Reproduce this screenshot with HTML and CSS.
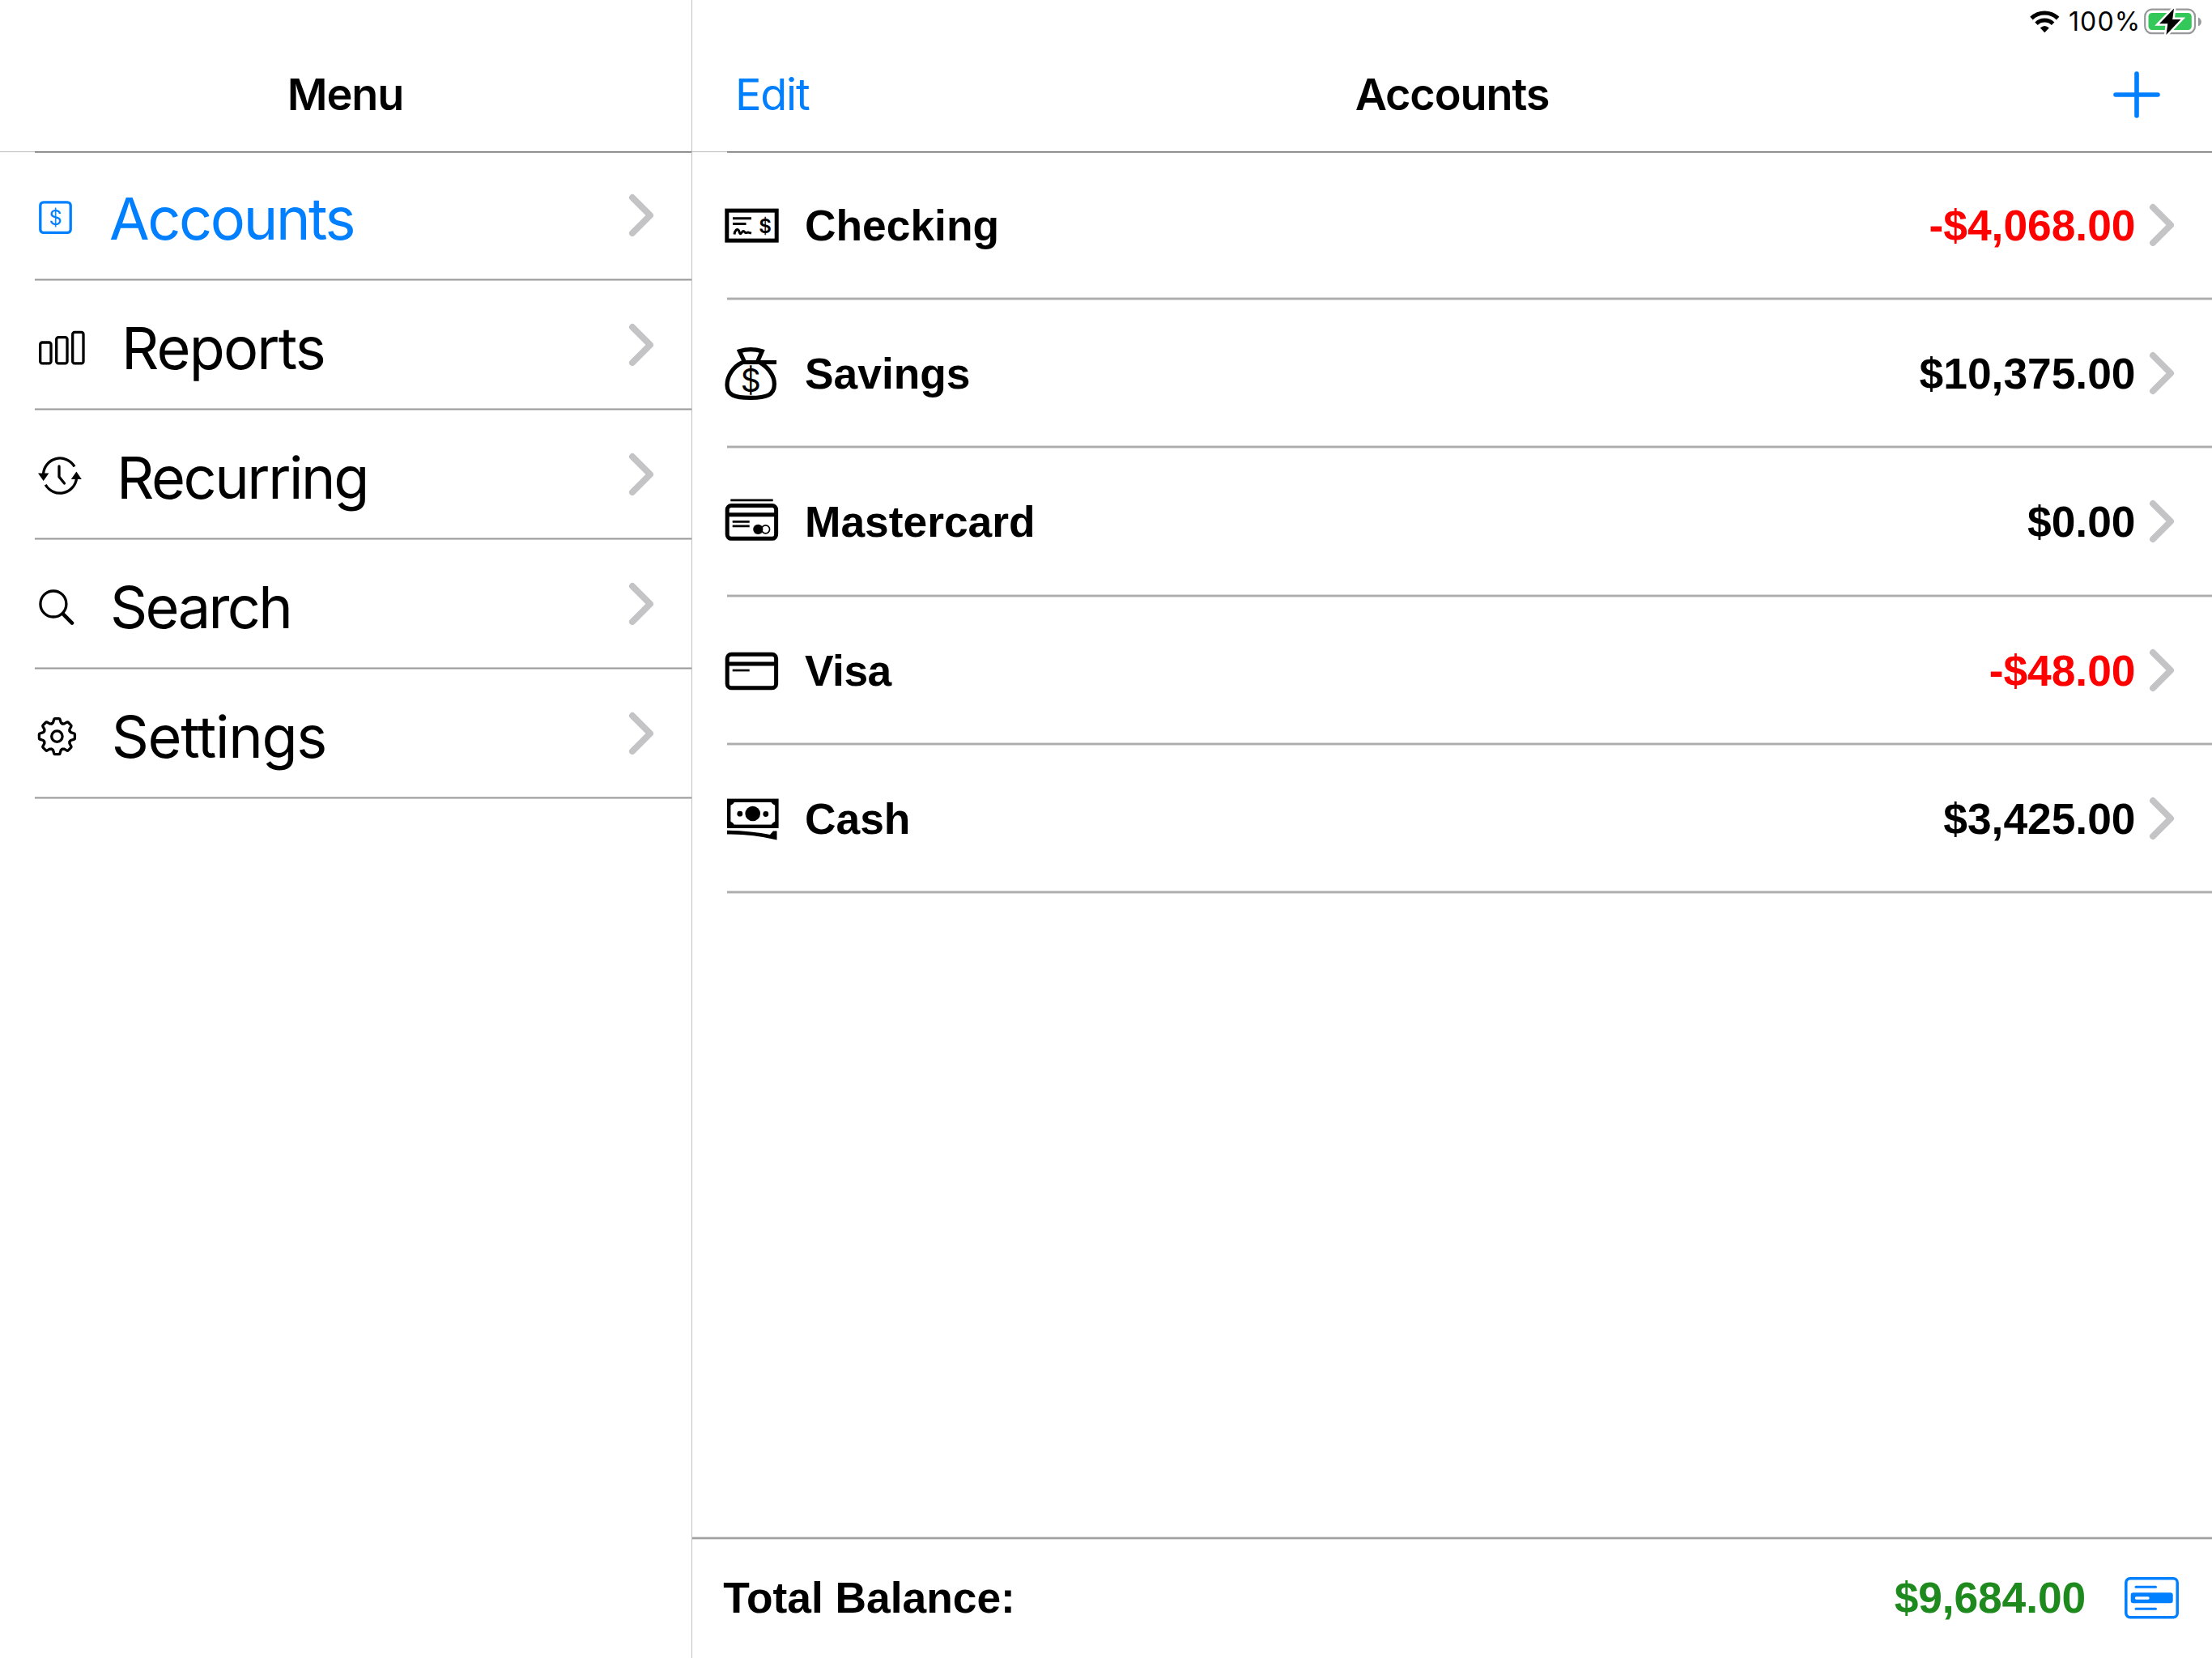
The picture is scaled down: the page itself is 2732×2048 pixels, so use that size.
FILE: index.html
```html
<!DOCTYPE html>
<html lang="en">
<head>
<meta charset="utf-8">
<title>Accounts</title>
<link rel="stylesheet" href="styles.css">
</head>
<body>
<svg class="defs" width="0" height="0" aria-hidden="true">
  <symbol id="chevron" viewBox="0 0 32 54"><path d="M5 5 27 27 5 49" fill="none" stroke="#c4c4c6" stroke-width="8" stroke-linecap="round" stroke-linejoin="round"/></symbol>
</svg>
<div class="app">
  <nav class="sidebar">
    <header class="navbar navbar-menu"><h1 class="title">Menu</h1></header>
    <ul class="menu">
      <li class="menu-row active">
        <svg class="menu-icon w-accounts" viewBox="43 192 92 152"><rect x="49.8" y="249.8" width="37.4" height="37.6" rx="4"/><text class="menu-dollar" x="68.4" y="277.6">$</text></svg>
        <span class="menu-label l-accounts">Accounts</span>
        <svg class="chev"><use href="#chevron"/></svg>
      </li>
      <li class="menu-row">
        <svg class="menu-icon w-reports" viewBox="43 352 107 152"><rect x="49.7" y="423" width="13.3" height="25.9" rx="2.5"/><rect x="69.7" y="416.6" width="13.3" height="32.3" rx="2.5"/><rect x="89.7" y="410.4" width="13.3" height="38.5" rx="2.5"/></svg>
        <span class="menu-label l-reports">Reports</span>
        <svg class="chev"><use href="#chevron"/></svg>
      </li>
      <li class="menu-row">
        <svg class="menu-icon w-recurring" viewBox="43 512 101 152"><path d="M53.5 586A20.6 20.6 0 0 1 92 576.4M56.2 598.8A20.6 20.6 0 0 0 94.6 590"/><path d="M73 576V589L79.5 597" stroke-linecap="round"/><path class="solid" d="M47 584.5H60.4L53.7 594zM94.4 582.5 100.8 592H87.8z"/></svg>
        <span class="menu-label l-recurring">Recurring</span>
        <svg class="chev"><use href="#chevron"/></svg>
      </li>
      <li class="menu-row">
        <svg class="menu-icon w-search" viewBox="43 672 93 152"><circle cx="65.9" cy="746" r="16"/><path d="M77.6 758.2 89 769.6" stroke-width="4.6" stroke-linecap="round"/></svg>
        <span class="menu-label l-search">Search</span>
        <svg class="chev"><use href="#chevron"/></svg>
      </li>
      <li class="menu-row">
        <svg class="menu-icon w-settings" viewBox="43 832 94.7 152">
          <g transform="translate(70.4 909.6)" stroke-linecap="round"><circle r="6.7"/>
            <path id="tooth" d="M-6.5-15.7 -4.9-17 -3.6-21.2Q-3.3-22-2.5-22H2.5Q3.3-22 3.6-21.2L4.9-17 6.5-15.7"/>
            <use href="#tooth" transform="rotate(45)"/><use href="#tooth" transform="rotate(90)"/><use href="#tooth" transform="rotate(135)"/><use href="#tooth" transform="rotate(180)"/><use href="#tooth" transform="rotate(225)"/><use href="#tooth" transform="rotate(270)"/><use href="#tooth" transform="rotate(315)"/>
          </g></svg>
        <span class="menu-label l-settings">Settings</span>
        <svg class="chev"><use href="#chevron"/></svg>
      </li>
    </ul>
  </nav>
  <main class="main">
    <div class="status">
      <svg class="wifi" viewBox="2505 0 42 46"><path d="M2509 22.6A23.5 23.5 0 0 1 2541.6 22.6M2515 29.2A14.8 14.8 0 0 1 2535.6 29.2" fill="none" stroke="#000" stroke-width="5"/><path d="M2519.8 34.6Q2525.3 29.4 2530.8 34.6L2525.3 40.2z"/></svg>
      <span class="percent">100%</span>
      <svg class="battery" viewBox="2646 0 76 46"><rect x="2649.2" y="11.7" width="61.8" height="29.4" rx="8.5" fill="none" stroke="#98989a" stroke-width="2.2"/><rect x="2653.5" y="16" width="53.3" height="21" rx="4.5" fill="#34c759"/><path d="M2715 21.5Q2718.8 23.5 2718.8 27T2715 32.5z" fill="#98989a"/><path class="bolt" d="M2685 10.5 2667 29.2H2677.3L2675.4 43 2693.4 24H2683.2z"/></svg>
    </div>
    <header class="navbar">
      <a class="edit">Edit</a>
      <h1 class="title">Accounts</h1>
      <svg class="plus" viewBox="0 0 58 58"><path d="M29 3V55M3 29H55"/></svg>
    </header>
    <ul class="accounts">
      <li class="account">
        <svg class="icon" viewBox="898 187.67 96 178.33"><rect x="897.8" y="259.8" width="61.4" height="37" stroke-width="5"/><path d="M905 269.3H928M905 276.1H921.5" stroke-width="3"/><path d="M907 289.2C907.5 284.5 910.5 281 912.5 284.5 913.5 287.5 914 289.5 915.5 287.5 917.5 284.5 918.5 284.5 920 286.5 922 288.5 923 286 924.5 286.8L928 287.8" stroke-width="3"/><text class="check-dollar" x="945" y="287.2">$</text></svg>
        <span class="name">Checking</span><span class="amount negative">-$4,068.00</span>
        <svg class="chev"><use href="#chevron"/></svg>
      </li>
      <li class="account">
        <svg class="icon" viewBox="898 371 96 178.33"><path d="M917 447.6C905 453 898 465 898 475.5 898 488 907 491.4 927 491.4S956.4 488 956.4 474.5C956.4 464 949 454 938 447.6M919.5 447 913.4 433.8Q927 429.6 941.2 433.8L935.5 447" stroke-width="5.2"/><path d="M917 447.6H959" stroke-width="5"/><text class="sack-dollar" x="927.3" y="484">$</text></svg>
        <span class="name">Savings</span><span class="amount">$10,375.00</span>
        <svg class="chev"><use href="#chevron"/></svg>
      </li>
      <li class="account">
        <svg class="icon" viewBox="898 554.33 96 178.33"><path d="M902.3 618.3H954.7" stroke-width="2.8"/><rect x="898.2" y="624.9" width="60.4" height="40.8" rx="5" stroke-width="5"/><path d="M898 636H959" stroke-width="5"/><path d="M904.7 644.7H925.7M904.7 650.2H925.7" stroke-width="2.7"/><circle cx="945.6" cy="654.2" r="5" stroke-width="1.7"/><circle class="solid" cx="936.3" cy="654.2" r="6.1"/></svg>
        <span class="name">Mastercard</span><span class="amount">$0.00</span>
        <svg class="chev"><use href="#chevron"/></svg>
      </li>
      <li class="account">
        <svg class="icon" viewBox="898 737.67 96 178.33"><rect x="898.2" y="808" width="60.4" height="41.3" rx="5" stroke-width="5"/><path d="M898 819.7H959" stroke-width="5"/><path d="M904.7 827.7H925.7" stroke-width="2.7"/></svg>
        <span class="name visa">Visa</span><span class="amount negative">-$48.00</span>
        <svg class="chev"><use href="#chevron"/></svg>
      </li>
      <li class="account">
        <svg class="icon" viewBox="898 921 96 178.33"><rect x="900.2" y="988.8" width="59.2" height="32" stroke-width="4.4"/><path class="solid" d="M900 988h7.5q0 5.5-7.5 7.5zM959.5 988h-7.5q0 5.5 7.5 7.5zM900 1021.5h7.5q0-5.5-7.5-7.5zM959.5 1021.5h-7.5q0-5.5 7.5-7.5z"/><circle class="solid" cx="929.7" cy="1005" r="9.3"/><circle class="solid" cx="913.8" cy="1005.2" r="3.4"/><circle class="solid" cx="945.8" cy="1005.5" r="3.4"/><path class="solid" d="M898 1025.8Q930 1026.5 951 1031L955 1026.5H959.5V1037.5Q928 1030 898 1030.6z"/></svg>
        <span class="name">Cash</span><span class="amount">$3,425.00</span>
        <svg class="chev"><use href="#chevron"/></svg>
      </li>
    </ul>
    <footer class="total">
      <span class="total-label">Total Balance:</span><span class="total-amount">$9,684.00</span>
      <svg class="card" viewBox="0 0 68 52"><rect x="1.8" y="1.8" width="63.4" height="48" rx="5" fill="none" stroke="#007fff" stroke-width="3.5"/><rect x="7.7" y="19.3" width="52" height="13" rx="3" fill="#007fff"/><path d="M14 12.3H38.5M14 39.3H38.5" stroke="#007fff" stroke-width="3" stroke-linecap="round"/><path d="M14.5 26H29" stroke="#fff" stroke-width="3.4" stroke-linecap="round"/></svg>
    </footer>
  </main>
</div>
</body>
</html>
```
FILE: styles.css
```css
* { box-sizing: border-box; }

body {
  margin: 0;
  background: #fff;
  color: #000;
  font-family: Inter, "Liberation Sans", sans-serif;
}

h1, ul { margin: 0; padding: 0; }
ul { list-style: none; }
.defs { position: absolute; }

.app {
  display: grid;
  grid-template-columns: 855px 1fr;
  height: 2048px;
  overflow: hidden;
}

.sidebar { border-right: 1px solid #c0c0c0; }
.main { display: flex; flex-direction: column; }

/* Navigation bars */
.navbar {
  display: grid;
  grid-template-columns: 1fr auto 1fr;
  align-items: center;
  height: 142px;
  padding: 0 53px;
  border-bottom: 1px solid #b8b8b8;
  font-size: 54px;
  line-height: 66px;
}
.navbar-menu {
  display: flex;
  justify-content: center;
  height: 188px;
  padding: 46px 1px 0 0;
}
.title {
  font-size: 54px;
  font-weight: 600;
  letter-spacing: -1.12px;
}
.edit { color: #007fff; letter-spacing: -1.2px; }
.plus {
  width: 58px;
  height: 58px;
  margin-right: 11px;
  justify-self: end;
  fill: none;
  stroke: #007fff;
  stroke-width: 5.6;
  stroke-linecap: round;
}

/* Status bar */
.status {
  display: flex;
  justify-content: flex-end;
  height: 46px;
  padding-right: 10px;
}
.wifi { width: 42px; height: 46px; margin-right: 8px; }
.percent {
  width: 91px;
  font-size: 32px;
  line-height: 53px;
  letter-spacing: 1.1px;
}
.battery { width: 76px; height: 46px; }
.bolt { stroke: #fff; stroke-width: 5; paint-order: stroke; }

/* Sidebar menu */
.menu { margin: -1px 0 0 43px; }
.menu-row {
  display: flex;
  align-items: center;
  height: 160px;
  padding: 5px 46px 3px 0;
  background: linear-gradient(#c9c9c9 0 1px, #999 1px 2px, #c9c9c9 2px) left bottom / 100% 3px no-repeat;
}
.menu-row:first-child, .account:first-child { position: relative; }
.menu-row:first-child::before, .account:first-child::before {
  content: "";
  position: absolute;
  inset: 0 0 auto;
  height: 2px;
  background: linear-gradient(#6a6a6a 0 1px, #a8a8a8 1px);
}
.menu-icon {
  flex: none;
  height: 152px;
  fill: none;
  stroke: currentColor;
  stroke-width: 3.3;
  stroke-linejoin: round;
}
.menu-icon text, .icon text {
  fill: currentColor;
  stroke: none;
  text-anchor: middle;
}
.menu-dollar { font-size: 25px; }
.solid { fill: #000; stroke: none; }
.w-accounts { width: 92px; }
.w-reports { width: 107px; }
.w-recurring { width: 101px; }
.w-search { width: 93px; }
.w-settings { width: 94.7px; }
.menu-label {
  flex: 1;
  padding-top: 3px;
  font-size: 72px;
  line-height: 88px;
}
.l-accounts { letter-spacing: -2.36px; }
.l-reports { letter-spacing: -1.8px; }
.l-recurring { letter-spacing: -2.4px; }
.l-search { letter-spacing: -2.6px; }
.l-settings { letter-spacing: -1.3px; }
.active { color: #007fff; }
.chev { width: 32px; height: 54px; flex: none; }
.menu-row .chev { margin-bottom: 4px; }

/* Account list */
.accounts { margin: -0.33px 0 0 43px; }
.account {
  display: flex;
  align-items: center;
  height: 183.333px;
  padding: 0 46px 5px 0;
  background: linear-gradient(#dadada 0 1px, #adadad 1px 3px, #dadada 3px) left bottom / 100% 4px no-repeat;
  font: 700 53.33px/60px "Liberation Sans", Arial, sans-serif;
}
.account:first-child::before { top: -0.67px; }
.account .chev { margin-top: 2px; }
.icon {
  flex: none;
  width: 96px;
  height: 178.33px;
  overflow: visible;
  fill: none;
  stroke: #000;
}
.check-dollar { font: 600 24px Inter, sans-serif; }
.sack-dollar { font: 400 39px Inter, sans-serif; }
.name { flex: 1; padding-top: 4px; }
.visa { letter-spacing: -0.5px; }
.account .amount { margin-right: 16.5px; padding-top: 4px; }
.negative { color: #f00; }

/* Total */
.total {
  display: flex;
  align-items: center;
  height: 150px;
  margin-top: auto;
  padding: 4px 40px 3px 38.3px;
  background: linear-gradient(#dadada 0 1px, #a0a0a0 1px 3px, #e2e2e2 3px) left top / 100% 4px no-repeat;
  font: 700 53.33px/60px "Liberation Sans", Arial, sans-serif;
}
.total-label { flex: 1; }
.total-amount { margin-right: 48px; color: #1e8a1e; letter-spacing: -0.1px; }
.card { width: 68px; height: 52px; }
```
